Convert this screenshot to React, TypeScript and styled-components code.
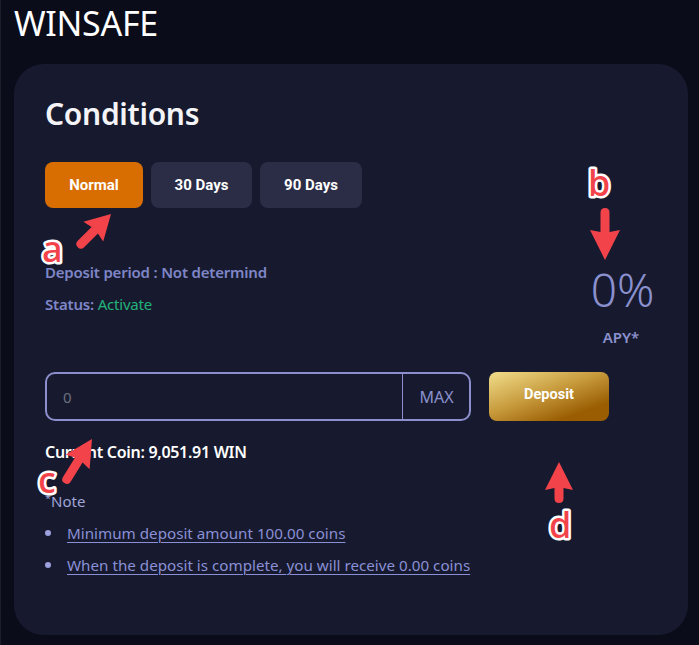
import React from 'react';
import styled, { createGlobalStyle } from 'styled-components';

const Global = createGlobalStyle`
  html, body { margin: 0; padding: 0; background: #0a0c1a; }
  body { font-family: "Noto Sans", sans-serif; }
  * { box-sizing: border-box; }
`;

const Page = styled.div`
  position: relative;
  width: 699px;
  height: 645px;
  background: #0a0c1a;
  display: flex;
  flex-direction: column;
  padding: 0 11px 10px 13px;
  overflow: hidden;
  border-left: 1px solid #1c1e2a;
`;

const Brand = styled.h1`
  margin: 0;
  height: 64px;
  font-family: "Noto Sans", sans-serif;
  font-weight: 400;
  font-size: 34px;
  line-height: 46px;
  color: #ffffff;
  letter-spacing: -0.3px;
`;

const Card = styled.section`
  flex: 1;
  background: #171a2e;
  border-radius: 30px;
  padding: 28px 31px 0 31px;
  display: flex;
  flex-direction: column;
`;

const TopRow = styled.div`
  display: flex;
  justify-content: space-between;
`;

const LeftCol = styled.div`
  display: flex;
  flex-direction: column;
`;

const Heading = styled.h2`
  margin: 0;
  font-family: "Noto Sans", sans-serif;
  font-weight: 600;
  font-size: 30px;
  line-height: 44px;
  color: #f4f4f8;
  letter-spacing: -0.3px;
`;

const Tabs = styled.div`
  display: flex;
  gap: 8px;
  margin-top: 26px;
`;

const Tab = styled.button<{ $active?: boolean; $w: number }>`
  width: ${p => p.$w}px;
  height: 46px;
  border: none;
  border-radius: 8px;
  background: ${p => (p.$active ? '#d86e02' : '#2b2d47')};
  color: #ffffff;
  font-family: Roboto, sans-serif;
  font-weight: 700;
  font-size: 15px;
  padding: 0;
`;

const InfoLine = styled.div<{ $top: number }>`
  margin-top: ${p => p.$top}px;
  font-family: "Noto Sans", sans-serif;
  font-weight: 600;
  font-size: 15px;
  line-height: 20px;
  color: #7f86c8;
  letter-spacing: -0.2px;
`;

const Green = styled.span`
  color: #23b27a;
  font-weight: 400;
`;

const ApyCol = styled.div`
  width: 72px;
  margin-top: 171px;
  display: flex;
  flex-direction: column;
  align-items: center;
`;

const ApyValue = styled.div`
  font-family: "Noto Sans", sans-serif;
  font-weight: 300;
  font-size: 46px;
  line-height: 52px;
  color: #8b91cf;
  margin-left: 3px;
`;

const ApyLabel = styled.div`
  margin-top: 13px;
  font-family: "Noto Sans", sans-serif;
  font-weight: 600;
  font-size: 15px;
  line-height: 18px;
  color: #8b91cf;
`;

const FormRow = styled.div`
  display: flex;
  gap: 18px;
  margin-top: 26px;
`;

const InputBox = styled.div`
  width: 426px;
  height: 49px;
  border: 2px solid #8d8fcc;
  border-radius: 10px;
  display: flex;
  align-items: stretch;
`;

const Field = styled.input`
  flex: 1;
  min-width: 0;
  background: transparent;
  border: none;
  outline: none;
  padding: 0 0 0 16px;
  font-family: "Noto Sans", sans-serif;
  font-size: 15px;
  color: #ffffff;
  &::placeholder { color: #6c6f7e; }
`;

const MaxButton = styled.button`
  width: 67px;
  border: none;
  border-left: 1px solid #8d8fcc;
  background: transparent;
  color: #8b91cf;
  font-family: "Noto Sans", sans-serif;
  font-size: 16px;
  padding: 0 0 0 1px;
`;

const DepositButton = styled.button`
  width: 120px;
  height: 49px;
  border: none;
  border-radius: 8px;
  background: linear-gradient(160deg, #f1de8c 0%, #c79a3c 45%, #9a5d02 80%, #9a5d02 100%);
  color: #ffffff;
  font-family: Roboto, sans-serif;
  font-weight: 700;
  font-size: 14.5px;
  padding: 0 0 4px 0;
`;

const Balance = styled.div`
  margin-top: 20px;
  font-family: "Noto Sans", sans-serif;
  font-weight: 600;
  font-size: 16px;
  line-height: 22px;
  color: #ffffff;
  letter-spacing: -0.3px;
`;

const NoteTitle = styled.div`
  margin-top: 24px;
  font-family: "Noto Sans", sans-serif;
  font-weight: 400;
  font-size: 15px;
  line-height: 22px;
  color: #a0a5d8;
`;

const Star = styled.span`
  font-size: 11px;
  vertical-align: 5px;
`;

const NoteList = styled.ul`
  margin: 10px 0 0 0;
  padding: 0;
  list-style: none;
  display: flex;
  flex-direction: column;
  gap: 10px;
`;

const NoteItem = styled.li`
  display: flex;
  align-items: center;
  gap: 16px;
  font-family: "Noto Sans", sans-serif;
  font-size: 15.2px;
  line-height: 22px;
  color: #8a90d6;
  &::before {
    content: "";
    width: 6px;
    height: 6px;
    border-radius: 50%;
    background: #9ca1dc;
  }
`;

const NoteLink = styled.a`
  color: inherit;
  text-decoration: underline;
  text-underline-offset: 3px;
  text-decoration-thickness: 1px;
`;

const Overlay = styled.svg`
  position: absolute;
  left: 0;
  top: 0;
  pointer-events: none;
`;

const Mark = styled.text`
  font-family: "Noto Sans", sans-serif;
  font-weight: 500;
  font-size: 36px;
  fill: #f2434b;
  stroke: #ffffff;
  stroke-width: 5px;
  stroke-linejoin: round;
  paint-order: stroke;
`;

const arrowPath = (len: number, head = 28, half = 15, shaft = 4.5) =>
  `M0,0 L${half},${head} L${shaft},${head - 2} L${shaft},${len - shaft} Q${shaft},${len} 0,${len} Q${-shaft},${len} ${-shaft},${len - shaft} L${-shaft},${head - 2} L${-half},${head} Z`;

const Arrow: React.FC<{ x: number; y: number; rot: number; len: number; head?: number; half?: number }> = ({ x, y, rot, len, head, half }) => (
  <path d={arrowPath(len, head, half)} transform={`translate(${x} ${y}) rotate(${rot})`} fill="#f2434b" />
);

export default function App() {
  return (
    <>
      <Global />
      <Page>
        <Brand>WINSAFE</Brand>
        <Card>
          <TopRow>
            <LeftCol>
              <Heading>Conditions</Heading>
              <Tabs>
                <Tab $active $w={98}>Normal</Tab>
                <Tab $w={101}>30 Days</Tab>
                <Tab $w={102}>90 Days</Tab>
              </Tabs>
              <InfoLine $top={54}>Deposit period : Not determind</InfoLine>
              <InfoLine $top={12}>
                Status: <Green>Activate</Green>
              </InfoLine>
            </LeftCol>
            <ApyCol>
              <ApyValue>0%</ApyValue>
              <ApyLabel>APY*</ApyLabel>
            </ApyCol>
          </TopRow>
          <FormRow>
            <InputBox>
              <Field placeholder="0" />
              <MaxButton>MAX</MaxButton>
            </InputBox>
            <DepositButton>Deposit</DepositButton>
          </FormRow>
          <Balance>Current Coin: 9,051.91 WIN</Balance>
          <NoteTitle>
            <Star>*</Star>Note
          </NoteTitle>
          <NoteList>
            <NoteItem>
              <NoteLink>Minimum deposit amount 100.00 coins</NoteLink>
            </NoteItem>
            <NoteItem>
              <NoteLink>When the deposit is complete, you will receive 0.00 coins</NoteLink>
            </NoteItem>
          </NoteList>
        </Card>
        <Overlay width="699" height="645" viewBox="0 0 699 645">
          <Arrow x={110} y={214} rot={45} len={47} head={25} half={14} />
          <Mark x={41} y={262}>a</Mark>
          <Arrow x={604} y={260} rot={180} len={52} head={30} half={15} />
          <Mark x={587} y={196}>b</Mark>
          <Arrow x={91} y={439} rot={32} len={52} head={27} half={14} />
          <Mark x={37} y={493}>c</Mark>
          <Arrow x={558} y={462} rot={0} len={41} head={28} half={14} />
          <Mark x={548} y={538}>d</Mark>
        </Overlay>
      </Page>
    </>
  );
}
